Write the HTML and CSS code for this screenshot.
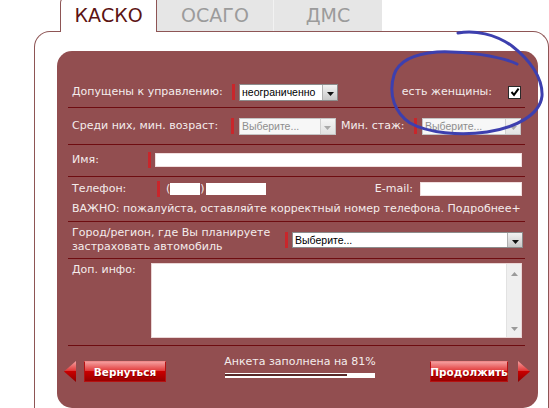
FILE: index.html
```html
<!DOCTYPE html>
<html lang="ru">
<head>
<meta charset="utf-8">
<title>КАСКО</title>
<link rel="stylesheet" href="styles.css">
</head>
<body>
<div class="page">
  <div class="tabs">
    <div class="tab tab-active">КАСКО</div>
    <div class="tab tab-osago">ОСАГО</div>
    <div class="tab tab-dms">ДМС</div>
  </div>
  <div class="frame">
    <div class="panel">
      <div class="row r1">
        <span class="label w-drivers">Допущены к управлению:</span>
        <span class="req"></span>
        <div class="select s-drivers"><span class="sel-text">неограниченно</span><span class="sel-btn"><svg width="7" height="4" viewBox="0 0 7 4"><path d="M0 0H7L3.5 4Z" fill="#111"/></svg></span></div>
        <span class="grow"></span>
        <span class="label">есть женщины:</span>
        <span class="check"><svg width="10" height="10" viewBox="0 0 10 10"><path d="M1.5 5 L4 7.8 L8.6 1.6" fill="none" stroke="#000" stroke-width="2"/></svg></span>
      </div>
      <div class="row r2">
        <span class="label w-age">Среди них, мин. возраст:</span>
        <span class="req req-wide"></span>
        <div class="select dis s-age"><span class="sel-text">Выберите...</span><span class="sel-btn"><svg width="7" height="4" viewBox="0 0 7 4"><path d="M0 0H7L3.5 4Z" fill="#a9a9a9"/></svg></span></div>
        <span class="label w-exp">Мин. стаж:</span>
        <span class="req req-wide"></span>
        <div class="select dis s-exp"><span class="sel-text">Выберите...</span><span class="sel-btn"><svg width="7" height="4" viewBox="0 0 7 4"><path d="M0 0H7L3.5 4Z" fill="#a9a9a9"/></svg></span></div>
      </div>
      <div class="row r3">
        <span class="label w-name">Имя:</span>
        <span class="req"></span>
        <span class="input in-name"></span>
      </div>
      <div class="row r4">
        <div class="phone-line">
          <span class="label w-phone">Телефон:</span>
          <span class="req req-phone"></span>
          <span class="paren">(</span><span class="box b-code"></span><span class="paren">)</span><span class="box b-num"></span>
          <span class="grow"></span>
          <span class="label l-email">E-mail:</span>
          <span class="input in-email"></span>
        </div>
        <div class="note">ВАЖНО: пожалуйста, оставляйте корректный номер телефона. Подробнее+</div>
      </div>
      <div class="row r5">
        <span class="label w-city">Город/регион, где Вы планируете<br>застраховать автомобиль</span>
        <span class="req"></span>
        <div class="select s-city"><span class="sel-text">Выберите...</span><span class="sel-btn"><svg width="7" height="4" viewBox="0 0 7 4"><path d="M0 0H7L3.5 4Z" fill="#111"/></svg></span></div>
      </div>
      <div class="row r6">
        <span class="label w-info">Доп. инфо:</span>
        <div class="textarea">
          <span class="ta-body"></span>
          <span class="scroll">
            <svg width="7" height="4" viewBox="0 0 7 4"><path d="M0 4H7L3.5 0Z" fill="#9a9a9a"/></svg>
            <svg width="7" height="4" viewBox="0 0 7 4"><path d="M0 0H7L3.5 4Z" fill="#9a9a9a"/></svg>
          </span>
        </div>
      </div>
      <div class="footer">
        <div class="nav">
          <svg class="arrow" width="12" height="21" viewBox="0 0 12 21"><defs><linearGradient id="ga" x1="0" y1="0" x2="0" y2="1"><stop offset="0" stop-color="#f7a3a3"/><stop offset="0.45" stop-color="#e13b3b"/><stop offset="0.5" stop-color="#c80000"/><stop offset="1" stop-color="#8e0000"/></linearGradient></defs><path d="M12 0V21L0 10.5Z" fill="url(#ga)"/></svg>
          <div class="btn btn-back">Вернуться</div>
        </div>
        <div class="progress">
          <div class="progress-text">Анкета заполнена на 81%</div>
          <div class="bar"><div class="fill" style="width:81%"></div></div>
        </div>
        <div class="nav nav-right">
          <div class="btn btn-next">Продолжить</div>
          <svg class="arrow" width="12" height="21" viewBox="0 0 12 21"><defs><linearGradient id="gb" x1="0" y1="0" x2="0" y2="1"><stop offset="0" stop-color="#f7a3a3"/><stop offset="0.45" stop-color="#e13b3b"/><stop offset="0.5" stop-color="#c80000"/><stop offset="1" stop-color="#8e0000"/></linearGradient></defs><path d="M0 0V21L12 10.5Z" fill="url(#gb)"/></svg>
        </div>
      </div>
    </div>
  </div>
  <svg class="scribble" width="549" height="408" viewBox="0 0 549 408"><path d="M458 33 C475 30 495 34 512 46 C530 60 543 78 542 96 C540 115 515 128 487 132 C460 136 428 133 410 123 C395 113 388 95 394 75 C398 62 412 54 437 52 C465 51 500 56 517 64" fill="none" stroke="#3d3fae" stroke-width="3" stroke-linecap="round" stroke-linejoin="round"/></svg>
</div>
</body>
</html>
```
FILE: styles.css
```css
* { box-sizing: border-box; margin: 0; padding: 0; }
html, body { width: 549px; height: 408px; overflow: hidden; background: #fff; }
body { font-family: "DejaVu Sans", Verdana, sans-serif; font-size: 11px; color: #f4ecec; }

.page { position: relative; width: 549px; height: 408px; overflow: hidden; }

.tabs { position: relative; z-index: 2; display: flex; align-items: flex-start; height: 31px; padding-left: 60px; }
.tab { height: 31px; font-size: 19px; line-height: 22px; text-align: center; }
.tab-active { width: 97px; height: 36px; margin-top: -4px; padding-top: 7px; background: #fff; border: 1px solid #8e5555; border-bottom: none; border-top-left-radius: 7px; color: #5c1313; }
.tab-osago, .tab-dms { background: #e6e6e6; color: #9b9b9b; padding-top: 4px; }
.tab-osago { width: 117px; border-right: 1px solid #f2f2f2; }
.tab-dms { width: 108px; }

.frame { width: 515px; height: 377px; margin-left: 34px; padding: 19px 0 0 22px; border: 1px solid #8e5555; border-bottom: none; border-radius: 16px 16px 0 0; }

.panel { width: 481px; height: 357px; padding: 26px 13px 0 11px; background: #924e50; border-radius: 15px; }

.row { display: flex; align-items: center; padding: 0 4px; border-bottom: 1px solid #6e0c10; }
.r1 { height: 31px; }
.r2 { height: 37px; }
.r3 { height: 32px; padding-bottom: 2px; }
.r4 { height: 45px; flex-direction: column; align-items: stretch; }
.r5 { height: 37px; }
.r6 { height: 87px; align-items: flex-start; padding-top: 4px; }

.label { white-space: nowrap; line-height: 14px; }
.w-drivers { width: 160px; }
.w-age { width: 161px; }
.w-exp { width: 74px; margin-left: 5px; }
.w-name { width: 76px; }
.w-phone { width: 85px; }
.w-city { width: 213px; }
.w-info { width: 79px; }
.grow { flex: 1; }

.req { width: 3px; height: 16px; margin-right: 4px; background: #c9262b; flex: none; }
.req-wide { margin-right: 5px; }
.req-phone { margin-right: 6px; }

.select { display: flex; height: 17px; background: #fff; border: 1px solid #8c8c8c; color: #000; font-family: "Liberation Sans", Arial, sans-serif; font-size: 10.5px; flex: none; }
.sel-text { flex: 1; padding-left: 2px; line-height: 15px; white-space: nowrap; overflow: hidden; }
.sel-btn { width: 15px; display: flex; align-items: center; justify-content: center; padding-top: 3px; background: linear-gradient(#f2f2f2, #c9c9c9); border-left: 1px solid #b0b0b0; }
.select.dis { background: #f7f7f7; border-color: #c4c4c4; color: #8e8e8e; }
.select.dis .sel-btn { background: linear-gradient(#f4f4f4, #e2e2e2); border-left-color: #d0d0d0; }
.s-drivers { width: 99px; }
.s-age { width: 97px; }
.s-exp { width: 99px; }
.s-city { width: 231px; height: 16px; margin-right: -2px; }
.s-city .sel-text { line-height: 14px; }

.check { width: 13px; height: 13px; margin: 0 0 0 16px; background: #fff; border: 1px solid #2a2a2a; display: flex; align-items: center; justify-content: center; }

.input { display: block; height: 14px; background: #fff; border: 1px solid #f1dede; }
.in-name { flex: 1; margin-right: -1px; }
.in-email { width: 102px; margin-right: -1px; }

.phone-line { display: flex; align-items: center; height: 24px; }
.paren { line-height: 14px; }
.box { display: block; height: 12px; background: #fff; }
.b-code { width: 30px; }
.b-num { width: 60px; margin-left: 1px; }
.l-email { margin-right: 7px; }
.note { height: 16px; line-height: 16px; white-space: nowrap; }

.textarea { display: flex; width: 373px; height: 75px; margin-right: -1px; background: #fff; border: 1px solid #ead6d6; }
.ta-body { flex: 1; }
.scroll { width: 15px; display: flex; flex-direction: column; justify-content: space-between; align-items: center; padding: 8px 0 6px; background: #efefef; border-left: 1px solid #e2e2e2; }

.footer { display: flex; justify-content: space-between; align-items: flex-start; margin: 0 -5px 0 -4px; padding-top: 15px; }
.nav { display: flex; align-items: center; gap: 8px; }
.nav-right { gap: 10px; }
.arrow { display: block; flex: none; }
.btn { height: 21px; display: flex; align-items: center; justify-content: center; color: #fff; font-weight: bold; font-size: 10.5px; text-shadow: 0 1px 0 rgba(90, 0, 0, 0.6); background: linear-gradient(#f49c9c 0%, #e23c3c 45%, #c90000 50%, #990000 100%); border: 1px solid #b51212; border-top-color: #ef8a8a; }
.btn-back { width: 82px; }
.btn-next { width: 78px; }

.progress { width: 150px; margin-top: -6px; margin-left: 4px; }
.progress-text { line-height: 14px; text-align: center; white-space: nowrap; margin: 0 -10px; }
.bar { height: 5px; margin-top: 4px; background: #fff; }
.fill { height: 5px; border-top: 1px solid #fff; border-bottom: 2px solid #fff; background: #5a2a2a; }

.scribble { position: absolute; left: 0; top: 0; z-index: 5; pointer-events: none; }
```
